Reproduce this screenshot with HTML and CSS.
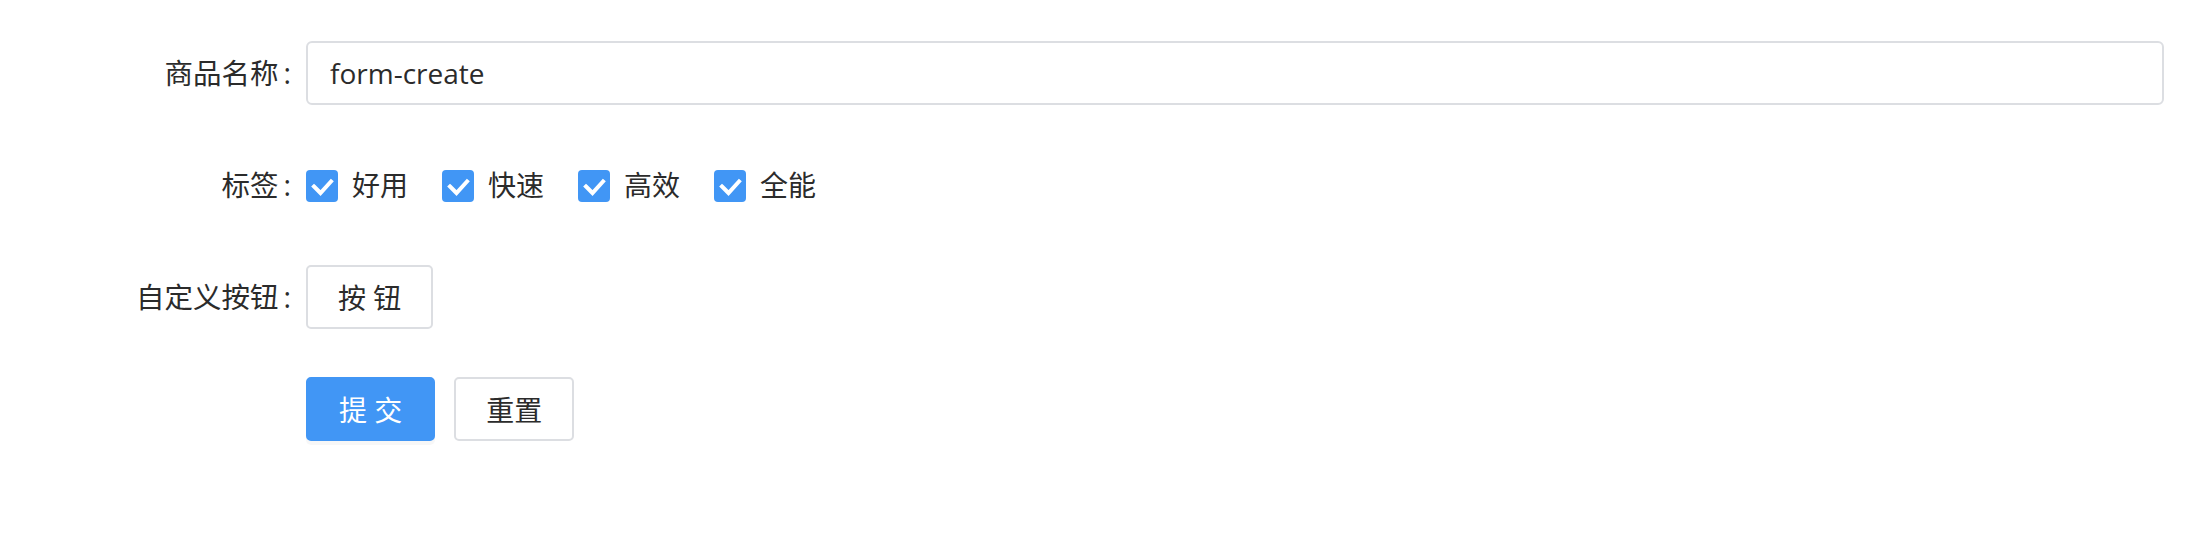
FILE: index.html
```html
<!DOCTYPE html>
<html lang="zh-CN">
<head>
  <meta charset="UTF-8" />
  <meta name="viewport" content="width=device-width, initial-scale=1.0" />
  <title>form-create</title>
  <link rel="stylesheet" href="styles.css">
</head>
<body>
  <form class="form" id="goodsForm">
    <div class="form-item">
      <label class="form-label" for="goodsName">商品名称<span class="colon">:</span></label>
      <div class="form-control">
        <input class="input" type="text" id="goodsName" value="form-create" />
      </div>
    </div>

    <div class="form-item">
      <label class="form-label">标签<span class="colon">:</span></label>
      <div class="form-control checks">
        <label class="check">
          <input type="checkbox" checked />
          <span class="check-box">
            <svg viewBox="0 0 32 32"><path d="M8 16.5 L14.5 23 L25 11.5" /></svg>
          </span>
          <span class="check-text">好用</span>
        </label>
        <label class="check">
          <input type="checkbox" checked />
          <span class="check-box">
            <svg viewBox="0 0 32 32"><path d="M8 16.5 L14.5 23 L25 11.5" /></svg>
          </span>
          <span class="check-text">快速</span>
        </label>
        <label class="check">
          <input type="checkbox" checked />
          <span class="check-box">
            <svg viewBox="0 0 32 32"><path d="M8 16.5 L14.5 23 L25 11.5" /></svg>
          </span>
          <span class="check-text">高效</span>
        </label>
        <label class="check">
          <input type="checkbox" checked />
          <span class="check-box">
            <svg viewBox="0 0 32 32"><path d="M8 16.5 L14.5 23 L25 11.5" /></svg>
          </span>
          <span class="check-text">全能</span>
        </label>
      </div>
    </div>

    <div class="form-item">
      <label class="form-label">自定义按钮<span class="colon">:</span></label>
      <div class="form-control">
        <button type="button" class="btn">按 钮</button>
      </div>
    </div>

    <div class="form-item">
      <div class="form-label"></div>
      <div class="form-control actions">
        <button type="submit" class="btn btn-primary">提 交</button>
        <button type="reset" class="btn">重置</button>
      </div>
    </div>
  </form>

  <script>
    document.getElementById('goodsForm').onsubmit = function (e) {
      e.preventDefault();
    };
  </script>
</body>
</html>
```

FILE: styles.css
```css
body {
  margin: 0;
  font-family: 'Open Sans', 'Noto Sans CJK SC', sans-serif;
  font-size: 28px;
  color: #2b2b2b;
  background: #fff;
}
.form {
  padding: 41px 44px 0 0;
}
.form-item {
  display: grid;
  grid-template-columns: 306px 1fr;
  height: 64px;
  margin-bottom: 48px;
}
.form-label {
  text-align: right;
  padding-right: 15px;
  line-height: 64px;
  font-size: 28.5px;
  color: #2b2b2b;
}
.colon {
  margin-left: 5px;
}
.form-control {
  display: flex;
  align-items: center;
}
.input {
  width: 100%;
  height: 64px;
  box-sizing: border-box;
  padding: 0 22px;
  font-family: 'Open Sans', 'Noto Sans CJK SC', sans-serif;
  font-size: 28px;
  color: #2b2b2b;
  border: 2px solid #dcdee2;
  border-radius: 6px;
  outline: none;
}
.checks {
  gap: 34px;
}
.check {
  display: flex;
  align-items: center;
  gap: 14px;
  cursor: pointer;
}
.check input {
  display: none;
}
.check-box {
  width: 32px;
  height: 32px;
  margin-top: 2px;
  border-radius: 4px;
  background: #4196f5;
  display: flex;
}
.check-box svg {
  width: 32px;
  height: 32px;
  fill: none;
  stroke: #fff;
  stroke-width: 4;
  stroke-linecap: square;
}
.check-text {
  line-height: 64px;
}
.actions {
  gap: 19px;
}
.btn {
  height: 64px;
  padding: 0 30px;
  font-family: 'Open Sans', 'Noto Sans CJK SC', sans-serif;
  font-size: 28px;
  color: #2b2b2b;
  background: #fff;
  border: 2px solid #dcdee2;
  border-radius: 5px;
  cursor: pointer;
}
.btn-primary {
  padding: 0 31px;
  color: #fff;
  background: #4196f5;
  border-color: #4196f5;
  box-shadow: 0 4px 0 rgba(0,0,0,0.03);
}
```
